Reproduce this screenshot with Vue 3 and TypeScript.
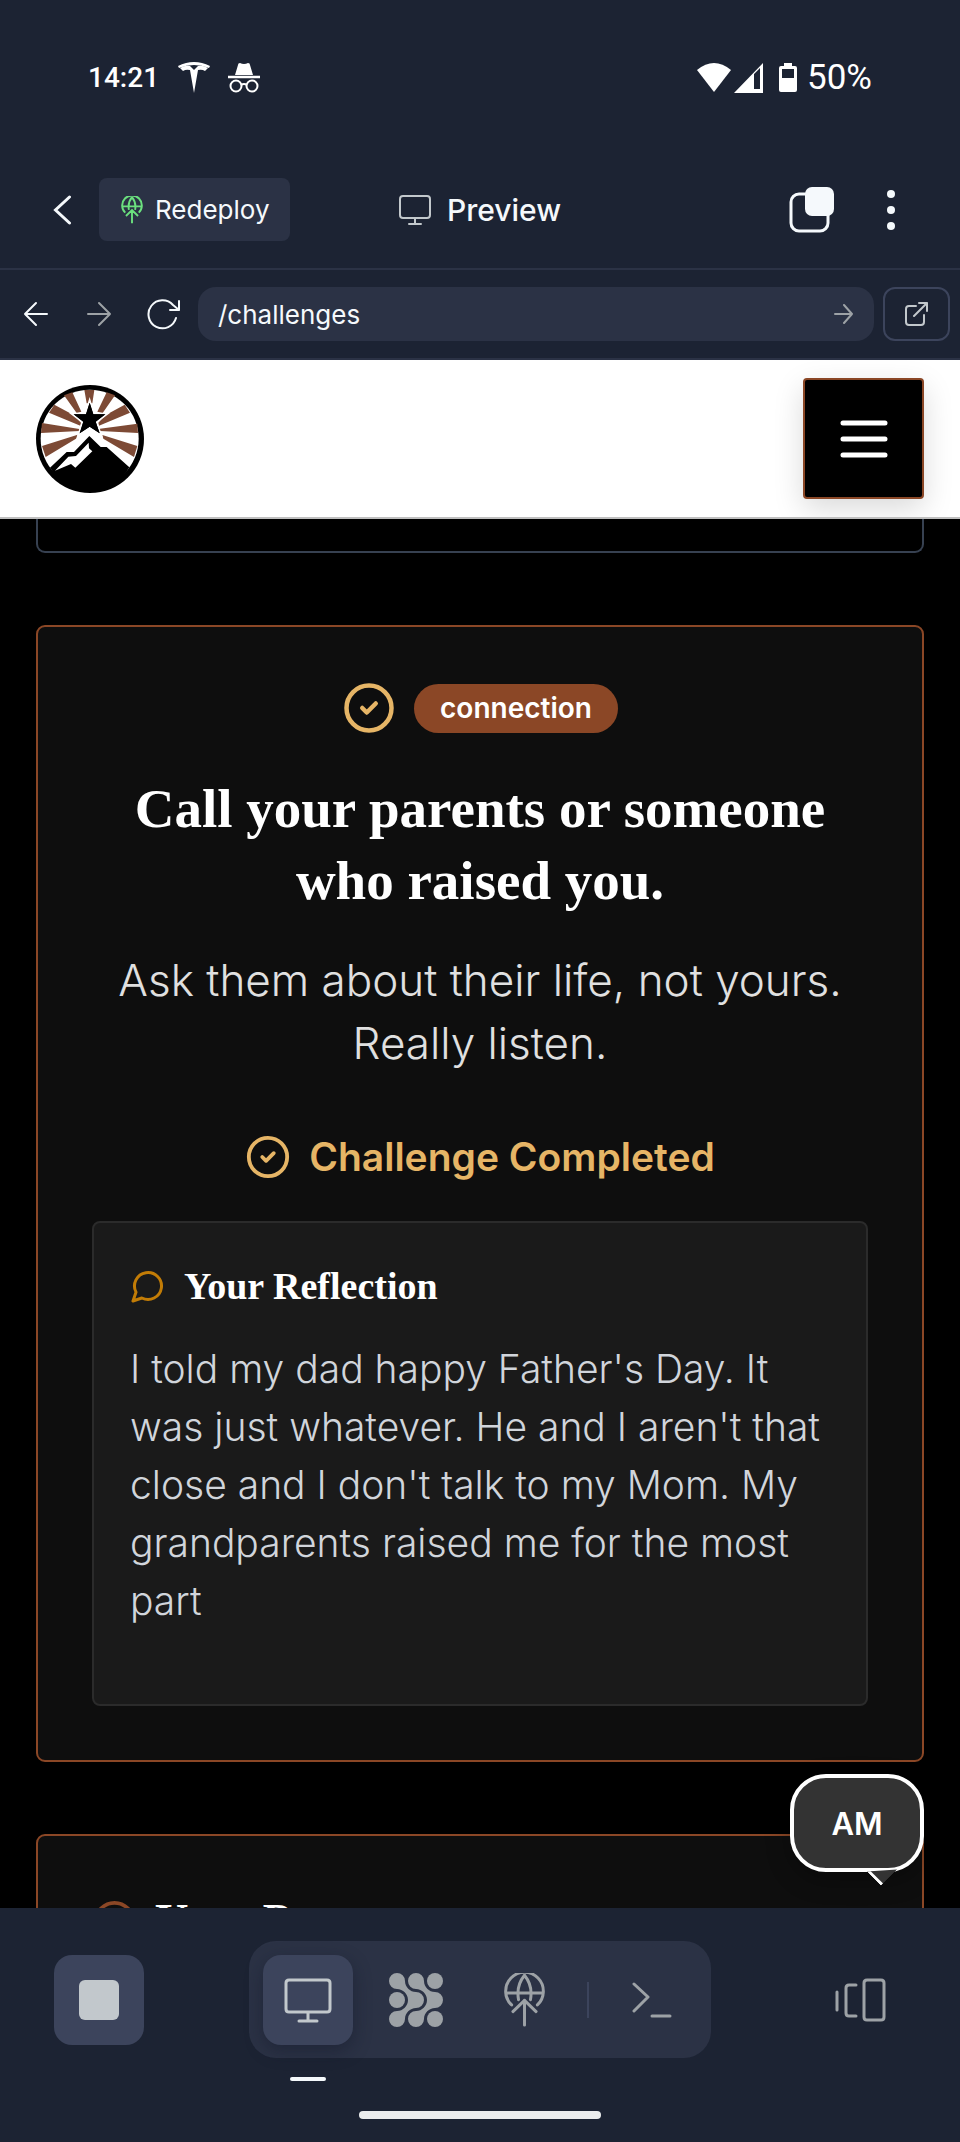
<script setup lang="ts">
import { ref } from 'vue'

const path = ref<string>('/challenges')
const reflection: string[] = [
  "I told my dad happy Father's Day. It",
  "was just whatever. He and I aren't that",
  "close and I don't talk to my Mom. My",
  'grandparents raised me for the most',
  'part',
]
</script>

<template>
  <div class="app">
    <div class="status">
      <div class="status-group">
        <time class="clock">14:21</time>
        <svg class="tesla" viewBox="0 0 32 31" fill="#fff" aria-hidden="true">
          <path d="M0 4Q16-4 32 4L31 6Q16 0 1 6Z" />
          <path d="M2 6Q7 3 12 4L16 8L20 4Q25 3 30 6L27 9Q24 7 20 8L16 31L12 8Q8 7 5 9Z" />
        </svg>
        <svg class="incognito" viewBox="0 0 32 30" aria-hidden="true">
          <path d="M7 12L10 2Q10 0 12 0Q16 2 20 0Q22 0 22 2L25 12Z" fill="#fff" />
          <path d="M0 14H32" stroke="#fff" stroke-width="2.5" />
          <g fill="none" stroke="#fff" stroke-width="2">
            <circle cx="8" cy="23" r="5.5" /><circle cx="24" cy="23" r="5.5" />
            <path d="M13 22Q16 20 19 22" />
          </g>
        </svg>
      </div>
      <div class="status-group right">
        <svg class="signals" viewBox="0 0 66 30" aria-hidden="true">
          <path d="M0 7Q17-7 34 7L17 29Z" fill="#fff" />
          <path fill-rule="evenodd" d="M37 30L66 0V30ZM57 11V26H63V5Z" fill="#fff" />
        </svg>
        <svg class="battery" viewBox="0 0 18 29" aria-hidden="true">
          <path fill-rule="evenodd" d="M5 0H13V3H16Q18 3 18 5V27Q18 29 16 29H2Q0 29 0 27V5Q0 3 2 3H5ZM3 6V15H15V6Z" fill="#fff" />
        </svg>
        <span class="percent">50%</span>
      </div>
    </div>

    <header class="toolbar">
      <div class="tool-left">
        <button class="back" type="button" aria-label="Back">
          <svg viewBox="0 0 18 30"><path d="M16 2L2 15L16 28" /></svg>
        </button>
        <button class="redeploy" type="button">
          <svg class="globe small" viewBox="790 126 124 162"><path d="M813 222A57 57 0 1 1 891 222M795 186H909M852 132Q826 164 834 206M852 132Q878 164 870 206M852 283V208M817 242L852 208L887 242" /></svg>
          Redeploy
        </button>
      </div>
      <h1 class="title">
        <svg viewBox="0 0 32 30"><path d="M4 1H28Q31 1 31 4V20Q31 23 28 23H4Q1 23 1 20V4Q1 1 4 1ZM16 23V28M10 29H22" /></svg>
        Preview
      </h1>
      <div class="tool-right">
        <button class="tabs" type="button" aria-label="Tabs">
          <svg viewBox="0 0 46 46"><rect x="2" y="7" width="37" height="37" rx="8" fill="none" stroke="#f5f9fc" stroke-width="3" /><rect x="16" y="0" width="29" height="29" rx="7" fill="#f5f9fc" /></svg>
        </button>
        <button class="more" type="button" aria-label="More options">
          <svg viewBox="0 0 8 40" fill="#f5f9fc"><circle cx="4" cy="4" r="4" /><circle cx="4" cy="20" r="4" /><circle cx="4" cy="36" r="4" /></svg>
        </button>
      </div>
    </header>

    <form class="address" @submit.prevent>
      <button class="nav" type="button" aria-label="Previous page">
        <svg width="26" height="26" viewBox="0 0 26 26"><path d="M24 13H2M13 2L2 13L13 24" /></svg>
      </button>
      <button class="nav dim" type="button" aria-label="Next page">
        <svg width="26" height="26" viewBox="0 0 26 26"><path d="M2 13H24M13 2L24 13L13 24" /></svg>
      </button>
      <button class="nav reload" type="button" aria-label="Reload">
        <svg width="34" height="32" viewBox="0 0 34 32"><path d="M29 20A14 14 0 1 1 26 7L32 12M32 3V12H23" /></svg>
      </button>
      <div class="field">
        <input v-model="path" type="text" aria-label="Page path" />
        <button type="submit" aria-label="Go">
          <svg width="20" height="20" viewBox="0 0 20 20"><path d="M1 10H18M10 1L18 10L10 19" /></svg>
        </button>
      </div>
      <a class="external" href="#" aria-label="Open in new tab">
        <svg width="24" height="24" viewBox="0 0 24 24"><path d="M11 4H4Q1 4 1 7V20Q1 23 4 23H16Q19 23 19 20V13M9 14L22 1M14 1H22V9" /></svg>
      </a>
    </form>

    <section class="preview">
      <div class="site-header">
        <a href="#" aria-label="Home">
          <svg class="logo" viewBox="108 75 324 324">
            <circle cx="270" cy="237" r="162" />
            <circle cx="269" cy="236" r="147" fill="#fff" />
            <path fill="#7d4a35" d="M253 90H283L277 130H260ZM192 106L217 97L244 155L230 159ZM345 106L320 97L292 155L308 159ZM163 134L147 158L241 197L243 188L222 166ZM374 134L390 158L297 197L295 188L316 166ZM126 189L123 219L238 213V207ZM412 191L414 219L300 213V206ZM126 258L137 291L228 236L233 224ZM412 258L402 291L310 236L307 225Z" />
            <path d="M269 128L280 163H316L287 185L299 220L269 200L239 220L250 185L221 163H258Z" fill="#000" stroke="#fff" stroke-width="10" paint-order="stroke" />
            <path d="M269 202L305 232L295 250H240L232 232Z" fill="#fff" />
            <path d="M269 128L280 163H316L287 185L299 220L269 200L239 220L250 185L221 163H258Z" />
            <path d="M150 323L200 276H222L268 228L302 261H320L388 322C365 365 320 390 270 390S175 365 150 323Z" />
            <path fill="#fff" d="M165 332L205 290L228 288L266 248L267 265L277 274L226 323L213 312Z" />
          </svg>
        </a>
        <button class="menu" type="button" aria-label="Menu">
          <svg viewBox="0 0 48 38"><path d="M3 3H45M3 19H45M3 35H45" /></svg>
        </button>
      </div>

      <main class="feed">
        <div class="card-end"></div>

        <article class="card">
          <div class="badges">
            <svg class="check big" viewBox="0 0 24 24"><circle cx="12" cy="12" r="10" /><path d="M9 12L11 14L15 10" /></svg>
            <span class="pill">connection</span>
          </div>
          <h2>Call your parents or someone<br />who raised you.</h2>
          <p class="lead">Ask them about their life, not yours.<br />Really listen.</p>
          <div class="done">
            <svg class="check" viewBox="0 0 24 24"><circle cx="12" cy="12" r="10" /><path d="M9 12L11 14L15 10" /></svg>
            Challenge Completed
          </div>
          <section class="reflection">
            <h3>
              <svg viewBox="0 0 24 24"><path d="M7.9 20A9 9 0 1 0 4 16.1L2 22Z" /></svg>
              Your Reflection
            </h3>
            <p>{{ reflection.join('\n') }}</p>
          </section>
        </article>

        <article class="card next">
          <h2>
            <svg viewBox="0 0 24 24"><circle cx="12" cy="12" r="10" /></svg>
            Your Progress
          </h2>
        </article>
      </main>

      <button class="bubble" type="button">AM</button>
    </section>

    <footer class="dock">
      <div class="dock-row">
        <button class="key filled" type="button" aria-label="Stop"><span class="stop"></span></button>
        <nav class="group" aria-label="Panels">
          <button class="key filled active" type="button" aria-label="Preview">
            <svg width="50" height="46" viewBox="0 0 50 46"><path d="M6 3H44Q47 3 47 6V32Q47 35 44 35H6Q3 35 3 32V6Q3 3 6 3ZM25 35V44M16 44H34" /></svg>
          </button>
          <button class="key" type="button" aria-label="Agent">
            <svg class="mesh" width="54" height="54" viewBox="0 0 54 54">
              <circle cx="46" cy="8" r="8" /><circle cx="8" cy="27" r="8" /><circle cx="46" cy="46" r="8" />
              <path d="M8 0A8 8 0 0 1 16 8C16 14 21 19 27 19A8 8 0 0 1 27 35C21 35 16 40 16 46A8 8 0 1 1 8 38C14 38 19 33 19 27S14 16 8 16A8 8 0 0 1 8 0Z" />
              <path d="M27 0A8 8 0 0 1 35 8C35 14 40 19 46 19A8 8 0 0 1 46 35C40 35 35 40 35 46A8 8 0 1 1 27 38C33 38 38 33 38 27S33 16 27 16A8 8 0 0 1 27 0Z" />
            </svg>
          </button>
          <button class="key" type="button" aria-label="Deployments">
            <svg class="globe" viewBox="790 126 124 162"><path d="M813 222A57 57 0 1 1 891 222M795 186H909M852 132Q826 164 834 206M852 132Q878 164 870 206M852 283V208M817 242L852 208L887 242" /></svg>
          </button>
          <span class="divider"></span>
          <button class="key" type="button" aria-label="Shell">
            <svg width="40" height="36" viewBox="0 0 40 36"><path d="M2 2L16 15L2 29M20 34H38" /></svg>
          </button>
        </nav>
        <button class="key last" type="button" aria-label="Switch panels">
          <svg width="52" height="46" viewBox="0 0 52 46"><path d="M2 15V33M21 8H14Q11 8 11 11V36Q11 39 14 39H21M32 3H46Q49 3 49 6V40Q49 43 46 43H32Q29 43 29 40V6Q29 3 32 3Z" /></svg>
        </button>
      </div>
      <div class="home"></div>
    </footer>
  </div>
</template>

<style>
body {
  background: #1c2333;
}
</style>

<style scoped>
.app {
  display: flex;
  flex-direction: column;
  height: 100vh;
  color: #f5f9fc;
  background: #1c2333;
  font-family: Inter, 'Open Sans', sans-serif;
}
* {
  box-sizing: border-box;
}
button {
  display: flex;
  align-items: center;
  justify-content: center;
  padding: 0;
  border: 0;
  background: none;
  color: inherit;
  font: inherit;
}
svg {
  display: block;
  flex: none;
}
h1,
h2,
h3,
p {
  margin: 0;
}
.status {
  display: flex;
  flex: none;
  justify-content: space-between;
  height: 155px;
  padding: 0 88px;
  color: #fff;
  font: 500 28px/1 Roboto, sans-serif;
}
.status-group {
  display: flex;
  align-items: center;
  gap: 18px;
}
.status-group.right {
  gap: 10px;
}
.clock {
  width: 72px;
}
.percent {
  font-size: 35px;
  font-weight: 400;
}
.tesla {
  width: 32px;
  height: 31px;
}
.incognito {
  width: 32px;
  height: 30px;
}
.signals {
  width: 66px;
  height: 30px;
  margin-right: 6px;
}
.battery {
  width: 18px;
  height: 29px;
}
.toolbar {
  display: grid;
  grid-template-columns: 1fr auto 1fr;
  flex: none;
  align-items: center;
  height: 115px;
  padding: 0 53px 4px;
  border-bottom: 2px solid #2b3245;
}
.tool-left,
.tool-right {
  display: flex;
  align-items: center;
}
.tool-left {
  gap: 27px;
}
.tool-right {
  justify-content: flex-end;
  gap: 52px;
  padding-right: 12px;
}
.back svg {
  width: 19px;
  height: 30px;
  fill: none;
  stroke: #f5f9fc;
  stroke-width: 3;
  stroke-linecap: round;
}
.redeploy {
  gap: 12px;
  height: 63px;
  padding: 0 20px 0 22px;
  border-radius: 8px;
  background: #2b3245;
  font-size: 26px;
}
.globe {
  width: 41px;
  height: 54px;
}
.globe.small {
  width: 22px;
  height: 28px;
  stroke: #6be07e;
  stroke-width: 11;
  fill: none;
}
.title {
  display: flex;
  align-items: center;
  gap: 16px;
  font-size: 30px;
  font-weight: 500;
}
.title svg {
  width: 32px;
  height: 30px;
  fill: none;
  stroke: #c2c8cc;
  stroke-width: 2;
  stroke-linecap: round;
}
.tabs svg {
  width: 46px;
  height: 46px;
}
.more svg {
  width: 8px;
  height: 40px;
}
.address {
  display: flex;
  flex: none;
  align-items: center;
  height: 90px;
  padding: 0 10px 0 4px;
  border-bottom: 2px solid #2b3245;
}
.address svg {
  fill: none;
  stroke: currentColor;
  stroke-width: 2;
  stroke-linecap: round;
  stroke-linejoin: round;
}
.nav {
  width: 63px;
  height: 54px;
}
.reload {
  width: 67px;
}
.dim,
.field button {
  color: #9da2a6;
}
.field {
  display: flex;
  flex: 1;
  min-width: 0;
  height: 54px;
  margin: 0 9px 0 1px;
  padding: 0 20px;
  border-radius: 18px;
  background: #2b3245;
}
.field input {
  flex: 1;
  min-width: 0;
  padding: 0;
  border: 0;
  outline: 0;
  color: inherit;
  background: none;
  font: 400 26px Inter, sans-serif;
}
.external {
  display: flex;
  align-items: center;
  justify-content: center;
  width: 67px;
  height: 54px;
  border: 2px solid #3c445c;
  border-radius: 12px;
  color: #c2c8cc;
}
.preview {
  position: relative;
  display: flex;
  flex: 1;
  flex-direction: column;
  min-height: 0;
  overflow: hidden;
  background: #000;
}
.site-header {
  display: flex;
  flex: none;
  align-items: center;
  justify-content: space-between;
  height: 159px;
  padding: 0 36px;
  border-bottom: 2px solid #bfbfbf;
  background: #fff;
  overflow: hidden;
}
.logo {
  width: 108px;
  height: 108px;
}
.menu {
  width: 121px;
  height: 121px;
  border: 2px solid #8b4726;
  border-radius: 4px;
  background: #000;
  box-shadow: 0 10px 30px rgb(0 0 0 / 15%);
}
.menu svg {
  width: 48px;
  height: 38px;
  stroke: #fff;
  stroke-width: 5;
  stroke-linecap: round;
}
.feed {
  display: flex;
  flex-direction: column;
  padding: 0 36px;
}
.card-end {
  flex: none;
  height: 34px;
  margin-bottom: 72px;
  border: 2px solid #374151;
  border-top: 0;
  border-radius: 0 0 9px 9px;
}
.card {
  display: flex;
  flex: none;
  flex-direction: column;
  padding: 54px;
  border: 2px solid #8b4726;
  border-radius: 9px;
  background: #0e0e0e;
}
.badges {
  display: flex;
  align-items: center;
  justify-content: center;
  gap: 18px;
  margin-bottom: 38px;
}
.check {
  width: 46px;
  height: 46px;
  fill: none;
  stroke: #e6b566;
  stroke-width: 2;
  stroke-linecap: round;
  stroke-linejoin: round;
}
.check.big {
  width: 54px;
  height: 54px;
}
.pill {
  padding: 0 26px;
  border-radius: 25px;
  color: #fff;
  background: #8b4726;
  font-size: 28px;
  font-weight: 600;
  line-height: 49px;
}
.card h2 {
  color: #fff;
  font: 700 55px/72px 'Liberation Serif', serif;
  text-align: center;
  white-space: nowrap;
}
.lead {
  margin-top: 32px;
  color: #e0e0e0;
  font-size: 44px;
  font-weight: 300;
  line-height: 63px;
  text-align: center;
  white-space: nowrap;
}
.done {
  display: flex;
  align-items: center;
  justify-content: center;
  gap: 18px;
  margin: 59px 0 41px;
  color: #e6b566;
  font-size: 39px;
  font-weight: 600;
  line-height: 46px;
}
.reflection {
  padding: 36px 36px 74px;
  border: 2px solid #2b2b2b;
  border-radius: 8px;
  background: #1a1a1a;
}
.reflection h3 {
  display: flex;
  align-items: center;
  gap: 18px;
  color: #fff;
  font: 700 38px/54px 'Liberation Serif', serif;
}
.reflection h3 svg {
  width: 36px;
  height: 36px;
  fill: none;
  stroke: #c27c06;
  stroke-width: 2;
  stroke-linejoin: round;
}
.reflection p {
  margin-top: 27px;
  color: #d1d5db;
  font-size: 39px;
  font-weight: 300;
  line-height: 58px;
  white-space: pre;
}
.card.next {
  margin-top: 72px;
  padding-top: 58px;
}
.card.next h2 {
  display: flex;
  align-items: center;
  gap: 18px;
  font-size: 46px;
  line-height: 54px;
}
.card.next svg {
  width: 45px;
  height: 45px;
  fill: none;
  stroke: #8b4726;
  stroke-width: 2;
}
.bubble {
  position: absolute;
  right: 36px;
  bottom: 36px;
  width: 134px;
  height: 98px;
  border: 4px solid #fff;
  border-radius: 36px;
  color: #fff;
  background: #333;
  font-size: 31px;
  font-weight: 600;
  box-shadow: 0 8px 24px rgb(0 0 0 / 30%);
}
.bubble::after {
  position: absolute;
  right: 28px;
  bottom: -14px;
  width: 20px;
  height: 20px;
  border-bottom: 3px solid #fff;
  background: #333;
  clip-path: polygon(100% 0, 100% 100%, 0 100%);
  content: '';
  transform: rotate(45deg);
}
.dock {
  flex: none;
  padding: 33px 54px 23px;
  background: #1c2333;
}
.dock-row {
  display: grid;
  grid-template-columns: 1fr auto 1fr;
  align-items: center;
}
.group {
  display: flex;
  align-items: center;
  gap: 18px;
  height: 117px;
  padding: 0 14px;
  border-radius: 27px;
  background: #2b3245;
}
.key {
  position: relative;
  width: 90px;
  height: 90px;
  border-radius: 18px;
  color: #9da2a6;
}
.key.filled {
  color: #c2c8cc;
  background: #3c445c;
}
.key.last {
  justify-self: end;
}
.key svg {
  fill: none;
  stroke: currentColor;
  stroke-width: 3;
  stroke-linecap: round;
  stroke-linejoin: round;
}
.key .mesh {
  fill: currentColor;
  stroke: none;
}
.key .globe {
  stroke-width: 9;
}
.active {
  box-shadow: 0 6px 18px rgb(14 21 37 / 40%);
}
.active::after {
  position: absolute;
  bottom: -36px;
  left: 27px;
  width: 36px;
  height: 4px;
  border-radius: 2px;
  background: #f5f9fc;
  content: '';
}
.divider {
  width: 2px;
  height: 36px;
  background: #3c445c;
}
.stop {
  width: 40px;
  height: 40px;
  border-radius: 6px;
  background: #c2c8cc;
}
.home {
  width: 242px;
  height: 8px;
  margin: 53px auto 0;
  border-radius: 4px;
  background: #ebedee;
}
</style>
